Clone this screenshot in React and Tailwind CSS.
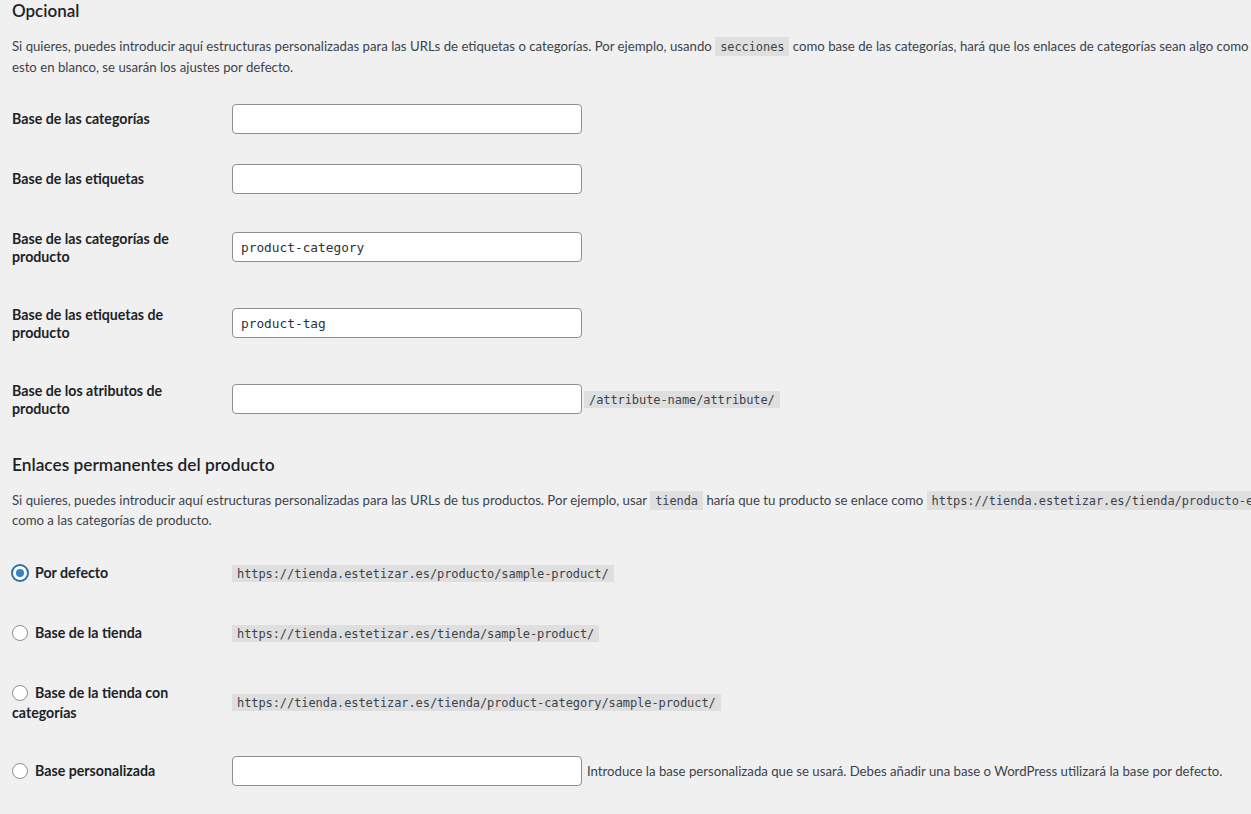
import React from "react";

const mono = "font-['DejaVu_Sans_Mono',monospace]";

const Code = ({ children, className = "" }) => (
  <code
    className={`${mono} bg-[#dfdfe0] px-[5px] pt-[3px] pb-[2px] text-[12px] leading-none tracking-[-0.08px] text-[#3c434a] ${className}`}
  >
    {children}
  </code>
);

const TextInput = ({ value = "" }) => (
  <input
    type="text"
    defaultValue={value}
    className={`${mono} h-[30px] w-[350px] rounded border border-[#8c8f94] bg-white px-2 text-[12.8px] text-[#2c3338] outline-none`}
  />
);

const Radio = ({ checked }) => (
  <span
    className={`relative mr-[7px] mt-[2px] inline-block h-4 w-4 rounded-full border bg-white align-top ${
      checked
        ? "border-[#2271b1] shadow-[0_0_0_1px_#2271b1]"
        : "border-[#8c8f94]"
    }`}
  >
    {checked && (
      <span className="absolute left-[3px] top-[3px] h-2 w-2 rounded-full bg-[#3582c4]" />
    )}
  </span>
);

const Row = ({ label, radio = false, children }) => (
  <div className="flex min-h-[60px] items-center">
    <div
      className={`w-[210px] shrink-0 self-start pr-2.5 text-[14.2px] font-bold text-[#1d2327] ${
        radio ? "pt-5 pb-[18px] leading-[20px]" : "pt-[21px] pb-[19px] leading-[18px]"
      }`}
    >
      {label}
    </div>
    <div className="flex items-center px-2.5">{children}</div>
  </div>
);

export default function App() {
  return (
    <div className="h-[814px] w-[1251px] overflow-hidden bg-[#f0f0f1] pl-3 font-[Lato,'Noto_Sans',sans-serif] text-[#3c434a]">
      <h2 className="whitespace-nowrap text-[17px] font-semibold leading-[22px] text-[#1d2327]">
        Opcional
      </h2>
      <p className="mt-[13.5px] whitespace-nowrap text-[13.2px] leading-[21px]">
        Si quieres, puedes introducir aquí estructuras personalizadas para las URLs de
        etiquetas o categorías. Por ejemplo, usando <Code>secciones</Code> como base de
        las categorías, hará que los enlaces de categorías sean algo como{" "}
        <Code>http://example.org/secciones/sin-categoria/</Code>. Si dejas
        <br />
        esto en blanco, se usarán los ajustes por defecto.
      </p>

      <div className="mt-[11.5px]">
        <Row label="Base de las categorías">
          <TextInput />
        </Row>
        <Row label="Base de las etiquetas">
          <TextInput />
        </Row>
        <Row
          label={
            <>
              Base de las categorías de
              <br />
              producto
            </>
          }
        >
          <TextInput value="product-category" />
        </Row>
        <Row
          label={
            <>
              Base de las etiquetas de
              <br />
              producto
            </>
          }
        >
          <TextInput value="product-tag" />
        </Row>
        <Row
          label={
            <>
              Base de los atributos de
              <br />
              producto
            </>
          }
        >
          <TextInput />
          <Code className="ml-[2px]">/attribute-name/attribute/</Code>
        </Row>
      </div>

      <h2 className="mt-[16.5px] whitespace-nowrap text-[17.3px] font-semibold leading-[22px] text-[#1d2327]">
        Enlaces permanentes del producto
      </h2>
      <p className="mt-[14.5px] whitespace-nowrap text-[13.2px] leading-[20px]">
        Si quieres, puedes introducir aquí estructuras personalizadas para las URLs de
        tus productos. Por ejemplo, usar <Code>tienda</Code> haría que tu producto se
        enlace como <Code>https://tienda.estetizar.es/tienda/producto-ejemplo/</Code>.
        Esta opción afecta tanto a los productos
        <br />
        como a las categorías de producto.
      </p>

      <div className="mt-[13px]">
        <Row
          radio
          label={
            <>
              <Radio checked />
              Por defecto
            </>
          }
        >
          <Code>https://tienda.estetizar.es/producto/sample-product/</Code>
        </Row>
        <Row
          radio
          label={
            <>
              <Radio />
              Base de la tienda
            </>
          }
        >
          <Code>https://tienda.estetizar.es/tienda/sample-product/</Code>
        </Row>
        <Row
          radio
          label={
            <>
              <Radio />
              Base de la tienda con
              <br />
              categorías
            </>
          }
        >
          <Code>https://tienda.estetizar.es/tienda/product-category/sample-product/</Code>
        </Row>
        <Row
          radio
          label={
            <>
              <Radio />
              Base personalizada
            </>
          }
        >
          <TextInput />
          <span className="ml-[5px] whitespace-nowrap text-[13.2px] leading-[18px]">
            Introduce la base personalizada que se usará. Debes añadir una base o
            WordPress utilizará la base por defecto.
          </span>
        </Row>
      </div>
    </div>
  );
}
